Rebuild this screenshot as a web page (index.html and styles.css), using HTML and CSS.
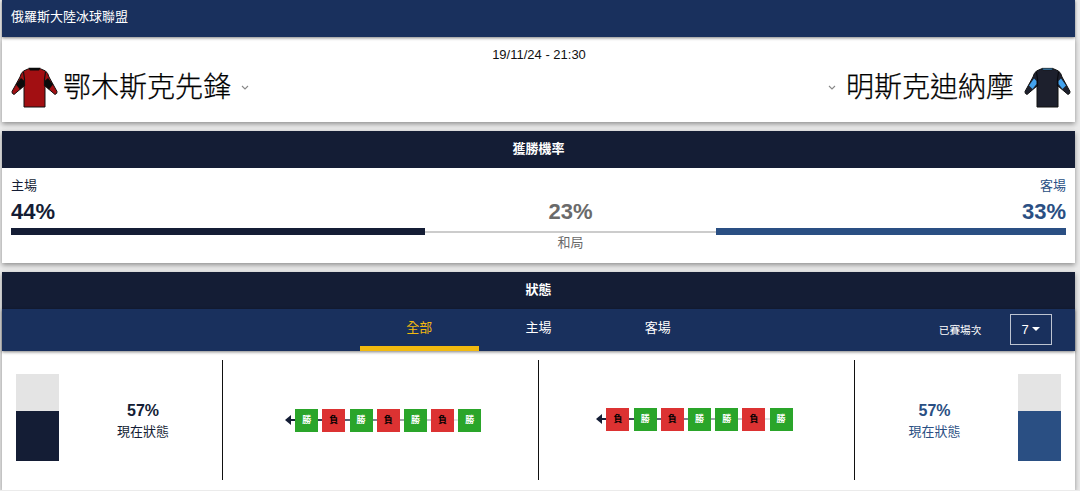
FILE: index.html
```html
<!DOCTYPE html>
<html lang="zh-Hant">
<head>
    <meta charset="UTF-8">
    <meta name="viewport" content="width=device-width, initial-scale=1.0">
    <title>鄂木斯克先鋒 - 明斯克迪納摩</title>
    <link rel="stylesheet" href="styles.css">
</head>
<body>
<div class="page">
    <!-- Match header -->
    <header class="league">俄羅斯大陸冰球聯盟</header>
    <section class="match">
        <div class="match-date">19/11/24 - 21:30</div>
        <div class="teams">
            <div class="team">
                <svg class="jersey" viewBox="0 0 47 41">
                    <path d="M12.5 4 17.5 1.8H29.5L34.5 4Q37 6 38 10L46 24.500Q46.500 26.500 44 27.500L34 19V40H13V19L3 27.500Q.5 26.500 1 24.500L9 10Q10 6 12.500 4Z" fill="#a20f12" stroke="#111" stroke-width="1"/>
                    <path d="M10 11 13.500 14V18L9 22.500 5 17.500Z" fill="#0a0a0a"/>
                    <path d="M37 11 33.500 14V18L38 22.500 42 17.500Z" fill="#0a0a0a"/>
                    <path d="M12.500 5 13.500 12V19M34.500 5 33.500 12V19" fill="none" stroke="#111" stroke-width="1.200"/>
                    <path d="M17.500 .8H29.500L28 3.400H19Z" fill="#0a0a0a"/>
                </svg>
                <h1 class="team-name">鄂木斯克先鋒</h1>
                <svg class="chevron" viewBox="0 0 8 5"><path d="M1 1 4 4 7 1"/></svg>
            </div>
            <div class="team team-away">
                <svg class="jersey" viewBox="0 0 47 41">
                    <path d="M12.5 4 17.5 1.8H29.5L34.5 4Q37 6 38 10L46 24.500Q46.500 26.500 44 27.500L34 19V40H13V19L3 27.500Q.5 26.500 1 24.500L9 10Q10 6 12.500 4Z" fill="#1d202d" stroke="#111" stroke-width="1"/>
                    <path d="M10 11.500 12.500 14V17L8.500 22 5 18.500Z" fill="#43a3ee"/>
                    <path d="M37 11.500 34.500 14V17L38.500 22 42 18.500Z" fill="#43a3ee"/>
                    <path d="M12.500 5 13.500 12V19M34.500 5 33.500 12V19" fill="none" stroke="#090a0f" stroke-width="1.200"/>
                    <path d="M18 1.300H29L28 3H19Z" fill="#3f8fc8" stroke="#111" stroke-width=".6"/>
                </svg>
                <h1 class="team-name">明斯克迪納摩</h1>
                <svg class="chevron" viewBox="0 0 8 5"><path d="M1 1 4 4 7 1"/></svg>
            </div>
        </div>
    </section>

    <!-- Win probability -->
    <section class="card">
        <h2 class="card-title">獲勝機率</h2>
        <div class="probability">
            <div class="prob prob-home" style="flex-grow: 414">
                <span class="prob-label">主場</span>
                <span class="prob-value">44%</span>
                <div class="prob-bar"></div>
            </div>
            <div class="prob prob-draw" style="flex-grow: 291">
                <span class="prob-value">23%</span>
                <div class="prob-bar"></div>
                <span class="prob-label">和局</span>
            </div>
            <div class="prob prob-away" style="flex-grow: 350">
                <span class="prob-label">客場</span>
                <span class="prob-value">33%</span>
                <div class="prob-bar"></div>
            </div>
        </div>
    </section>

    <!-- Form -->
    <section class="card">
        <h2 class="card-title">狀態</h2>
        <nav class="tabs">
            <div class="tab tab-active">全部</div>
            <div class="tab">主場</div>
            <div class="tab">客場</div>
            <div class="matches-played">
                <span>已賽場次</span>
                <button class="dropdown">7<i class="caret"></i></button>
            </div>
        </nav>
        <div class="form">
            <div class="form-col form-team form-home">
                <div class="meter"><div class="meter-fill" style="height: 57%"></div></div>
                <div class="form-text"><strong>57%</strong><span>現在狀態</span></div>
            </div>
            <div class="form-col">
                <div class="streak">
                    <i class="arrow"></i>
                    <b class="win">勝</b><b class="loss">負</b><b class="win">勝</b><b class="loss">負</b><b class="win">勝</b><b class="loss">負</b><b class="win">勝</b>
                </div>
            </div>
            <div class="form-col form-col-right">
                <div class="streak">
                    <i class="arrow"></i>
                    <b class="loss">負</b><b class="win">勝</b><b class="loss">負</b><b class="win">勝</b><b class="win">勝</b><b class="loss">負</b><b class="win">勝</b>
                </div>
            </div>
            <div class="form-col form-team form-away">
                <div class="meter"><div class="meter-fill" style="height: 57%"></div></div>
                <div class="form-text"><strong>57%</strong><span>現在狀態</span></div>
            </div>
        </div>
    </section>
</div>
</body>
</html>
```

FILE: styles.css
```css
* {
    box-sizing: border-box;
}

body {
    margin: 0;
    background: #ebebeb;
    color: #111;
    font-family: "Liberation Sans", "Noto Sans CJK TC", sans-serif;
    font-size: 13px;
    overflow: hidden;
}

.page {
    width: 1073px;
    margin-left: 2px;
}

/* Match header */
.league {
    position: relative;
    height: 36.5px;
    padding-left: 9px;
    background: #19305d;
    color: #fff;
    line-height: 34px;
    box-shadow: 0 1px 3px rgba(0, 0, 0, 0.5);
}

.match {
    height: 85.5px;
    padding: 9px 4px 0 9px;
    background: #fff;
    box-shadow: 0 2px 5px rgba(0, 0, 0, 0.4);
}

.match-date {
    height: 19px;
    line-height: 17px;
    text-align: center;
    padding-right: 4px;
}

.teams {
    display: flex;
    justify-content: space-between;
}

.team {
    display: flex;
    align-items: center;
    height: 46px;
}

.team-away {
    flex-direction: row-reverse;
}

.jersey {
    width: 47px;
    height: 41px;
}

.team-name {
    margin: 0 10px 0 5px;
    color: #000;
    font-size: 28px;
    font-weight: 300;
    line-height: 46px;
    -webkit-text-stroke: 0.25px #000;
}

.team-away .team-name {
    margin: 0 10px 0 10px;
}

.chevron {
    width: 8px;
    height: 5px;
    fill: none;
    stroke: #888;
    stroke-width: 1.1;
}

/* Cards */
.card {
    margin-top: 9px;
    background: #fff;
    box-shadow: 0 2px 5px rgba(0, 0, 0, 0.4);
}

.card-title {
    height: 37px;
    margin: 0;
    background: #141d35;
    color: #fff;
    font-size: 13px;
    font-weight: 700;
    line-height: 36px;
    text-align: center;
}

/* Win probability */
.probability {
    display: flex;
    height: 94.5px;
    padding: 9px 9px 0 9px;
}

.prob {
    display: flex;
    flex: 1 1 0;
    flex-direction: column;
    color: #141d35;
}

.prob-label {
    height: 17px;
    line-height: 17px;
}

.prob-value {
    height: 34px;
    font-size: 22px;
    font-weight: 700;
    line-height: 35px;
}

.prob-bar {
    height: 6.5px;
    background: #141d35;
}

.prob-draw {
    padding-top: 17px;
    color: #6a6a6a;
    text-align: center;
}

.prob-draw .prob-bar {
    height: 2px;
    margin: 3px 0 1px;
    background: #ccc;
}

.prob-away {
    color: #2a4f83;
    text-align: right;
}

.prob-away .prob-bar {
    background: #2a4f83;
}

/* Tabs */
.tabs {
    display: flex;
    justify-content: center;
    position: relative;
    height: 42px;
    background: #19305d;
    color: #fff;
    box-shadow: 0 1px 3px rgba(0, 0, 0, 0.5);
}

.tab {
    width: 119.3px;
    line-height: 37px;
    text-align: center;
}

.tab-active {
    border-bottom: 5px solid #f1b90f;
    color: #f1b90f;
}

.matches-played {
    position: absolute;
    top: 5px;
    right: 23.5px;
    display: flex;
    align-items: center;
    gap: 28px;
    font-size: 10.7px;
}

.dropdown {
    display: flex;
    align-items: center;
    justify-content: center;
    gap: 3px;
    width: 42px;
    height: 31px;
    padding: 0;
    border: 1px solid #bdc4d1;
    background: none;
    color: #fff;
    font: 13px "Liberation Sans", sans-serif;
}

.caret {
    border: 4px solid transparent;
    border-top-color: #fff;
    border-bottom: 0;
}

/* Form */
.form {
    display: flex;
    height: 139px;
    padding: 9px 0 10px;
}

.form-col {
    display: flex;
    align-items: center;
    flex: 0 0 316px;
    padding: 1px 0 0 61.5px;
    border-right: 1px solid #111;
}

.form-col-right {
    padding: 0 0 1px 56.8px;
}

.form-team {
    flex: 0 0 221px;
    align-items: flex-start;
    padding: 14px 0 0 14px;
}

.form-away {
    flex: 1;
    flex-direction: row-reverse;
    padding: 14px 14px 0 0;
    border: 0;
}

.meter {
    display: flex;
    align-items: flex-end;
    width: 43px;
    height: 87px;
    background: #e4e4e4;
}

.meter-fill {
    width: 100%;
    background: #141d35;
}

.form-away .meter-fill {
    background: #2a4f83;
}

.form-text {
    display: flex;
    flex: 1;
    flex-direction: column;
    padding: 26px 0 0 5px;
    color: #141d35;
    text-align: center;
}

.form-text strong {
    font-size: 16px;
    line-height: 21px;
}

.form-text span {
    line-height: 22px;
}

.form-away .form-text {
    padding: 26px 4px 0 0;
    color: #2a4f83;
}

.streak {
    display: flex;
    align-items: center;
    gap: 4.2px;
    background: linear-gradient(90deg, #141d35, #f4f4f4 180px) 5px center / 180px 2px no-repeat;
}

.streak b {
    width: 23px;
    height: 23px;
    font-size: 9px;
    line-height: 22px;
    text-align: center;
}

.arrow {
    margin-right: 0.5px;
    border: 5px solid transparent;
    border-right: 6px solid #141d35;
    border-left: 0;
}

.win {
    background: #2aa52a;
    color: #fff;
}

.loss {
    background: #dc3232;
    color: #000;
}
```
